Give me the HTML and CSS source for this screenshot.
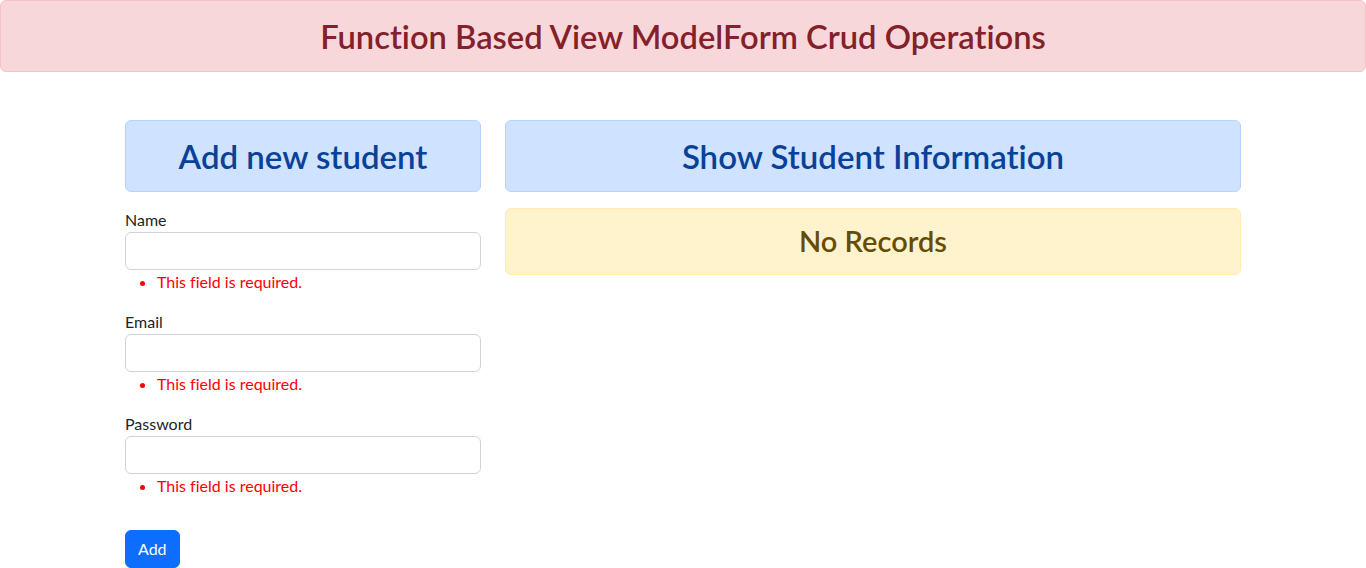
FILE: index.html
```html
<!DOCTYPE html>
<html lang="en">
<head>
<meta charset="utf-8">
<title>Function Based View ModelForm Crud Operations</title>
<link rel="stylesheet" href="styles.css">
</head>
<body>
<h2 class="alert alert-danger alert-title text-center">Function Based View ModelForm Crud Operations</h2>
<div class="container">
  <div class="row">
    <div class="col-4">
      <h2 class="alert alert-primary text-center">Add new student</h2>
      <form class="form">
        <div class="field">
          <label class="label" for="id_name">Name</label>
          <input class="input" type="text" id="id_name">
          <ul class="errorlist"><li>This field is required.</li></ul>
        </div>
        <div class="field">
          <label class="label" for="id_email">Email</label>
          <input class="input" type="email" id="id_email">
          <ul class="errorlist"><li>This field is required.</li></ul>
        </div>
        <div class="field">
          <label class="label" for="id_password">Password</label>
          <input class="input" type="password" id="id_password">
          <ul class="errorlist"><li>This field is required.</li></ul>
        </div>
        <button class="btn" type="button">Add</button>
      </form>
    </div>
    <div class="col-8">
      <h2 class="alert alert-primary text-center">Show Student Information</h2>
      <h3 class="alert alert-warning text-center">No Records</h3>
    </div>
  </div>
</div>
</body>
</html>
```
FILE: styles.css
```css
* { box-sizing: border-box; }
html, body { margin: 0; padding: 0; }
body {
  font-family: "Lato", "Open Sans", sans-serif;
  font-size: 16px;
  line-height: 24px;
  color: #212529;
  background: #fff;
  font-variant-ligatures: none;
}
.alert {
  margin: 0 0 16px 0;
  padding: 16px;
  border: 1px solid transparent;
  border-radius: 6px;
  font-weight: 600;
}
h2.alert { font-size: 33px; line-height: 38px; }
h2.alert-title { font-size: 32.7px; padding: 17px 16px 15px; }
h3.alert { font-size: 29px; line-height: 32px; padding-bottom: 17px; }
.alert-danger { background: #f8d7da; border-color: #f5c2c7; color: #842029; margin-bottom: 48px; }
.alert-primary { background: #cfe2ff; border-color: #b6d4fe; color: #084298; }
.alert-warning { background: #fff3cd; border-color: #ffecb5; color: #664d03; }
.text-center { text-align: center; }
.container { width: 1140px; margin: 0 auto; padding: 0 12px; }
.row { display: flex; margin: 0 -12px; }
.col-4 { flex: 0 0 33.3333%; padding: 0 12px; }
.col-8 { flex: 0 0 66.6667%; padding: 0 12px; }
.form { display: flex; flex-direction: column; }
.field { display: flex; flex-direction: column; margin-bottom: 16px; }
.label { display: block; }
.input {
  display: block;
  width: 100%;
  height: 38px;
  padding: 6px 12px;
  font: inherit;
  border: 1px solid #ced4da;
  border-radius: 6px;
  background: #fff;
}
.errorlist { margin: 0; padding-left: 32px; color: red; }
.btn {
  align-self: flex-start;
  margin-top: 16px;
  height: 38px;
  padding: 6px 12px;
  font: inherit;
  color: #fff;
  background: #0d6efd;
  border: 1px solid #0d6efd;
  border-radius: 6px;
}
```
